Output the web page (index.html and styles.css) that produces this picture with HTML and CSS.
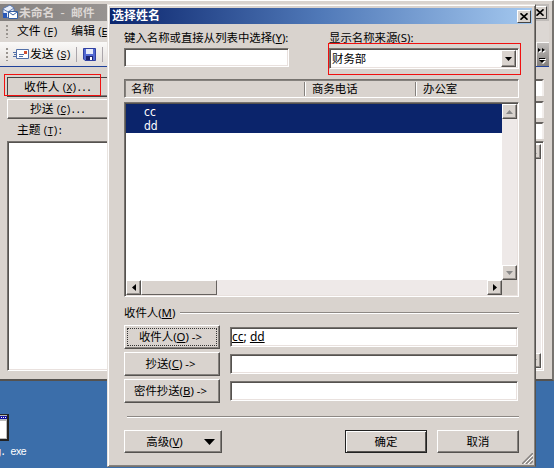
FILE: index.html
```html
<!DOCTYPE html>
<html lang="zh-CN">
<head>
<meta charset="utf-8">
<title>选择姓名</title>
<link rel="stylesheet" href="styles.css">
</head>
<body>
<div class="desktop">
  <div class="shortcut">
    <svg width="9" height="27" viewBox="0 0 9 27"><path fill="#222" d="M0 0h9v27H0z"/><path fill="#bbb" d="M0 1h7v24H0z"/><path fill="#1212a0" d="M0 2h7v3H0z"/><path fill="#fff" d="M1 3h1v1H1zM3 3h1v1H3zM5 3h1v1H5zM0 7h6v17H0z"/></svg>
    <span>g. exe</span>
  </div>

  <section class="mail">
    <header class="mail-title">
      <svg class="mail-icon" width="17" height="17" viewBox="0 0 17 17"><path fill="#e8eef9" stroke="#5977ad" d="M1 4.5 8 1l4 3v7l-8 3-3-4z"/><path fill="none" stroke="#5977ad" d="m1 5 5 3 6-4"/><path fill="#fff" stroke="#3560a5" d="M6.5 7.5h9v7h-9z"/><path fill="none" stroke="#3560a5" d="m7 8 4 3 4-3"/><path fill="#2858b8" d="M1 9h4v5H1z"/></svg>
      <b>未命名 <small>-</small> 邮件</b>
      <span class="close"><svg width="8" height="7" viewBox="0 0 8 7"><path d="m.5.3 7 6.4m0-6.4-7 6.4" stroke="#000" stroke-width="1.6"/></svg></span>
    </header>
    <nav class="menu"><i class="grip"></i><span>文件<small>(<u>F</u>)</small></span><span>编辑<small>(<u>E</u>)</small></span></nav>
    <div class="toolbar">
      <i class="grip"></i>
      <svg width="16" height="11" viewBox="0 0 16 11"><path fill="#fff" stroke="#526fa7" d="M3.5.5h12v9h-12z"/><path stroke="#526fa7" d="M0 3.5h3M1 5.5h2M0 7.5h3M6 5.500h5M6 7.500h4"/><path fill="#d25030" d="M11 2h3v3h-3z"/></svg>
      <span class="send">发送<small>(<u>S</u>)</small></span>
      <i class="bar"></i>
      <svg width="13" height="13" viewBox="0 0 13 13"><path fill="#5268d2" stroke="#3140a0" d="M.5.5h12v12H2l-1.500-1.500z"/><path fill="#e5eafa" d="M3 1h7v5H3z"/><path fill="#1c2470" d="M3 8h7v4H3z"/><path fill="#fff" d="M7 9h2v3H7z"/></svg>
      <i class="bar"></i>
      <span class="more"><svg width="9" height="20" viewBox="0 0 9 20"><path fill="#fff" d="m1 4 3 2-3 2zm4 0 3 2-3 2zM2 14h6v1H2zm0 2h6l-3 3z"/><path d="m0 3 3 2-3 2zm4 0 3 2-3 2zM1 13h6v1H1zm0 2h6l-3 3z"/></svg></span>
    </div>
    <div class="mail-fields">
      <div class="mail-row first"><span class="btn mark"><span>收件人<small>(<u>X</u>)...</small></span></span><span class="field"></span></div>
      <div class="mail-row"><span class="btn"><span>抄送<small>(<u>C</u>)...</small></span></span><span class="field"></span></div>
      <div class="mail-row subject"><span>主题<small>(<u>T</u>):</small></span><span class="field"></span></div>
      <div class="mail-body sunken">
        <div class="vscroll"><i class="sb"><svg width="7" height="4" viewBox="0 0 7 4"><path fill="#888" d="M0 4h7L3.500 0z"/></svg></i><i class="sb"><svg width="7" height="4" viewBox="0 0 7 4"><path fill="#888" d="M0 0h7L3.500 4z"/></svg></i></div>
      </div>
    </div>
  </section>

  <section class="dialog">
    <header class="title"><b>选择姓名</b><span class="close"><svg width="8" height="7" viewBox="0 0 8 7"><path d="m.5.3 7 6.400m0-6.400-7 6.400" stroke="#000" stroke-width="1.600"/></svg></span></header>
    <div class="content">
      <div class="search">
        <label class="find"><span>键入名称或直接从列表中选择(<u>Y</u>):</span><span class="sunken"></span></label>
        <label class="source"><span>显示名称来源(<u>S</u>):</span><span class="select sunken"><span>财务部</span><i class="sb"><svg width="7" height="4" viewBox="0 0 7 4"><path d="M0 0h7L3.500 4z"/></svg></i></span></label>
      </div>
      <div class="columns"><span>名称</span><span>商务电话</span><span>办公室</span></div>
      <div class="list sunken">
        <div class="rows"><div class="selected"><span>cc</span><span>dd</span></div></div>
        <div class="vscroll"><i class="sb"><svg width="7" height="4" viewBox="0 0 7 4"><path fill="#888" d="M0 4h7L3.500 0z"/></svg></i><i class="sb"><svg width="7" height="4" viewBox="0 0 7 4"><path fill="#888" d="M0 0h7L3.500 4z"/></svg></i></div>
        <div class="hscroll"><i class="sb"><svg width="4" height="7" viewBox="0 0 4 7"><path d="M4 0v7L0 3.500z"/></svg></i><i class="thumb"></i><i class="sb end"><svg width="4" height="7" viewBox="0 0 4 7"><path d="M0 0v7l4-3.500z"/></svg></i></div>
        <div class="corner"></div>
      </div>
      <div class="group"><span>收件人(<u>M</u>)</span><hr></div>
      <div class="recipients">
        <span class="btn focus">收件人(<u>O</u>) -&gt;</span><span class="sunken"><u>cc</u>; <u>dd</u></span>
        <span class="btn">抄送(<u>C</u>) -&gt;</span><span class="sunken"></span>
        <span class="btn">密件抄送(<u>B</u>) -&gt;</span><span class="sunken"></span>
      </div>
      <hr class="divider">
      <footer><span class="btn advanced"><span>高级(<u>V</u>)</span><svg width="11" height="6" viewBox="0 0 11 6"><path d="M0 0h11L5.500 6z"/></svg></span><span class="btn ok">确定</span><span class="btn cancel">取消</span></footer>
    </div>
    <svg class="resize" width="11" height="11" viewBox="0 0 11 11"><path d="M0 11 11 0M4 11l7-7M8 11l3-3" stroke="#85817f" stroke-width="1.500"/><path d="m2 11 9-9M6 11l5-5" stroke="#fff"/></svg>
  </section>
  <div class="highlight-to"></div>
  <div class="highlight-source"></div>
</div>
</body>
</html>
```
FILE: styles.css
```css
* { box-sizing: border-box; }
body { margin: 0; }
i { font-style: normal; }
svg { display: block; fill: none; flex: none; }
svg path:not([fill]) { fill: #000; }
u { text-underline-offset: 1px; text-decoration-thickness: 1px; }
.desktop {
  position: relative; width: 554px; height: 468px; overflow: hidden;
  background: #3b6eaa; color: #000;
  font: 11.4px/14px "Noto Sans", "Noto Sans CJK SC", sans-serif;
}
.shortcut {
  position: absolute; left: 0; top: 414px; color: #fff;
  font: 10px/14px "Liberation Mono", monospace;
}
.shortcut span { display: block; margin: 4px 0 0 -5px; white-space: pre; font-size: 10.5px; letter-spacing: -1.2px; }

/* shared controls */
.sunken {
  display: block; background: #fff; border: 1px solid; border-color: #77736f #fff #fff #77736f;
  box-shadow: inset 1px 1px #55524f, inset -1px -1px #e9e1de;
}
.btn {
  display: flex; align-items: center; justify-content: center; background: #d9d3ce;
  border: 1px solid; border-color: #fff #55524f #55524f #fff;
  box-shadow: inset -1px -1px #85817d; white-space: nowrap;
}
.sb {
  display: flex; align-items: center; justify-content: center; flex: none;
  width: 15px; height: 15px; background: #d9d3ce; border: 1px solid;
  border-color: #fff #55524f #55524f #fff; box-shadow: inset -1px -1px #96918d;
}
.close {
  display: flex; align-items: center; justify-content: center; width: 14px; height: 13px;
  margin-left: auto; background: #d9d3ce; border: 1px solid; border-color: #fff #444 #444 #fff;
}
.vscroll { display: flex; flex-direction: column; justify-content: space-between; background: #eee9e8; }
hr { margin: 0; height: 2px; border: 0; border-top: 1px solid #8d8884; background: #fff; }

/* mail window */
.mail {
  position: absolute; left: -2px; top: 0; width: 556px; height: 381px; padding: 3px 3px 0 2px;
  background: #d9d3ce; border-top: 1px solid #fff; border-right: 2px solid #77736f; border-bottom: 2px solid #55524f;
  font-family: "Noto Sans CJK SC", sans-serif; font-size: 11.8px;
}
.mail small { font: 10px/14px "Liberation Mono", monospace; letter-spacing: -1.1px; margin-left: 2px; }
.mail-title {
  display: flex; align-items: center; height: 17px; padding: 0 2px;
  background: linear-gradient(90deg, #85817f, #989492 20%, #c0bcb9); color: #dcd7d4;
}
.mail-title b { margin-left: 0; white-space: pre; }
.mail-title small { font-size: 12px; margin: 0 2px; letter-spacing: 0; }
.menu { display: flex; align-items: center; height: 21px; padding-left: 6px; background: #dcd7d3; }
.menu span { margin-right: 14px; }
.menu .grip { margin-right: 9px; }
.grip { width: 2px; height: 13px; background: repeating-linear-gradient(#99948f 0 2px, transparent 2px 4px); }
.toolbar { display: flex; align-items: center; height: 25px; padding-left: 6px; background: linear-gradient(#faf9f8, #e2ddda); border-bottom: 1px solid #1f419b; }
.toolbar .grip { margin-right: 5px; }
.send { margin-left: 1px; }
.bar { width: 1px; height: 15px; margin: 0 6px 0 6px; background: #aaa5aa; }
.more { width: 12px; height: 23px; margin: 0 0 0 auto; padding: 2px 1px; background: linear-gradient(#c0bdbb, #84807d); }
.mail-fields { padding: 9px 5px 0 7px; }
.mail-row { display: flex; align-items: center; justify-content: space-between; height: 22px; }
.mail-row .btn { width: 107px; height: 20px; padding-right: 6px; }
.mail-row .btn.mark { border-color: #444; }
.mail-row .field { width: 30px; height: 17px; background: #fff; border-top: 2px solid #66625f; border-right: 2px solid #f2eeec; }
.subject { padding-left: 10px; height: 20px; }
.mail-body { height: 230px; margin-top: 1px; display: flex; justify-content: flex-end; padding: 2px; }

/* name picker */
.dialog {
  position: absolute; left: 107px; top: 4px; width: 429px; height: 463px; padding: 3px 3px 0 1px;
  background: #d9d3ce; border: 1px solid; border-color: #e9e4e0 #55524f #77736f #e9e4e0;
  box-shadow: inset 1px 1px #fff, inset -1px -1px #85817d;
}
.title { display: flex; align-items: center; height: 16px; margin-left: 1px; padding: 0 1px 0 2px; background: linear-gradient(90deg, #0b256d, #5079b8 50%, #a4c8ef); color: #fff; }
.title b { font-size: 12px; }
.content { padding: 7px 13px 0 15px; }
.search { display: flex; justify-content: space-between; height: 48px; }
.search label > span:first-child { display: block; height: 17px; white-space: nowrap; }
.find { width: 165px; }
.find .sunken { height: 19px; }
.source { width: 190px; }
.select { height: 21px; padding: 2px; display: flex; justify-content: space-between; align-items: center; }
.select .sb { height: 17px; }
.columns {
  display: grid; grid-template-columns: 180px 111px 1fr; align-items: center; height: 19px; margin-bottom: 4px;
  border: 1px solid; border-color: #77736f #fff #fff #77736f; box-shadow: inset 1px 1px #85817d;
}
.columns span { padding-left: 6px; border-left: 1px solid #fff; box-shadow: -1px 0 #85817d; }
.columns span:first-child { border: 0; box-shadow: none; }
.list { display: grid; grid-template: 1fr 15px / 1fr 15px; height: 195px; padding: 1px; }
.selected { height: 29px; padding: 1px 0 0 18px; background: #0b246b; color: #fff; font: 12px/14px "DejaVu Sans Condensed", "DejaVu Sans", sans-serif; }
.selected span { display: block; }
.hscroll { display: flex; background: #eee9e8; }
.thumb { width: 76px; background: #d9d3ce; border: 1px solid; border-color: #fff #66625f #66625f #fff; }
.end { margin-left: auto; }
.corner { background: #d9d3ce; }
.group { display: flex; align-items: center; gap: 5px; height: 14px; margin: 9px 0 5px; }
.group hr { flex: 1; }
.recipients { display: grid; grid-template-columns: 96px 288px; grid-auto-rows: 24px; gap: 3px 10px; align-items: center; }
.recipients .btn { height: 24px; padding-right: 3px; }
.recipients .sunken { height: 20px; padding: 2px 1px; font-size: 12px; }
.focus { outline: 1px dotted #333; outline-offset: -4px; }
.divider { margin: 13px 0 12px 3px; }
footer { display: flex; height: 23px; }
.advanced { width: 98px; gap: 21px; padding-left: 15px; }
.ok { width: 82px; margin-left: auto; border-color: #222; box-shadow: inset 1px 1px #fff, inset -1px -1px #55524f; }
.cancel { width: 82px; margin-left: 10px; }
.resize { position: absolute; right: 2px; bottom: 2px; }
.highlight-to, .highlight-source { position: absolute; border: 1px solid #f01010; }
.highlight-to { left: 4px; top: 74px; width: 97px; height: 22px; }
.highlight-source { left: 328px; top: 43px; width: 193px; height: 32px; }
```
